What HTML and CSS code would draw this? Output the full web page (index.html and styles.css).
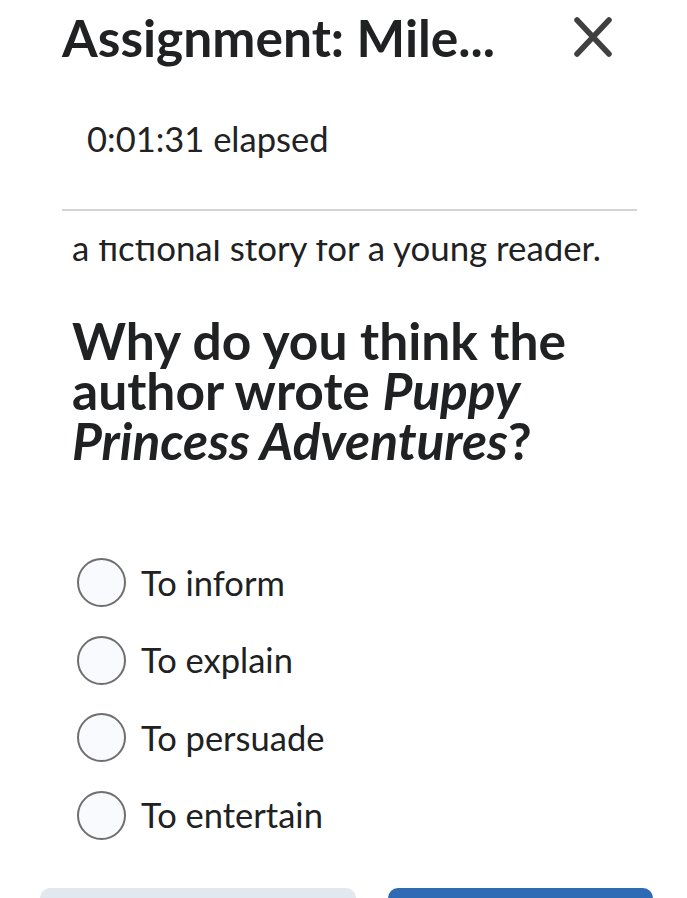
FILE: index.html
```html
<!DOCTYPE html>
<html lang="en">
<head>
<meta charset="utf-8">
<title>Assignment</title>
<link rel="stylesheet" href="styles.css">
</head>
<body>
<div class="app">
  <header class="header">
    <div class="title-row">
      <h1 class="title">Assignment: Mile...</h1>
      <button class="close" aria-label="Close">
        <svg width="40" height="40" viewBox="0 0 40 40" aria-hidden="true">
          <path d="M4 3 L36 37 M36 3 L4 37" stroke="#404040" stroke-width="5.5" stroke-linecap="round" fill="none"/>
        </svg>
      </button>
    </div>
    <div class="timer">0:01:31 elapsed</div>
    <hr class="divider">
  </header>
  <main class="scroll">
    <p class="passage">a fictional story for a young reader.</p>
    <h2 class="question">Why do you think the author wrote <em>Puppy Princess Adventures</em>?</h2>
    <ul class="options">
      <li class="option"><span class="radio"></span><span class="label">To inform</span></li>
      <li class="option"><span class="radio"></span><span class="label">To explain</span></li>
      <li class="option"><span class="radio"></span><span class="label">To persuade</span></li>
      <li class="option"><span class="radio"></span><span class="label">To entertain</span></li>
    </ul>
    <div class="actions">
      <button class="btn btn-secondary"></button>
      <button class="btn btn-primary"></button>
    </div>
  </main>
</div>
</body>
</html>
```

FILE: styles.css
```css
html, body {
  margin: 0;
  padding: 0;
  height: 100%;
  overflow: hidden;
  background: #ffffff;
}

body {
  font-family: Lato, "Noto Sans", sans-serif;
  color: #202122;
}

.app {
  display: flex;
  flex-direction: column;
  height: 100%;
}

.header {
  padding: 7px 74px 0 62px;
}

.title-row {
  display: flex;
  align-items: center;
  justify-content: space-between;
}

.title {
  margin: 0;
  font-size: 51.5px;
  line-height: 60px;
  font-weight: 700;
  color: #202122;
  white-space: nowrap;
}

.close {
  border: 0;
  background: none;
  padding: 0;
  width: 40px;
  height: 40px;
  display: flex;
}

.timer {
  margin-top: 52px;
  padding-left: 25px;
  font-size: 34.5px;
  line-height: 40px;
  color: #222222;
}

.divider {
  margin: 50px -24px 0 0;
  border: 0;
  height: 2px;
  background: #d4d4d4;
}

.scroll {
  flex: 1;
  overflow: hidden;
  margin-top: 29px;
  padding: 0 50px 0 72px;
}

.passage {
  margin: -12px 0 0 0;
  font-size: 34.8px;
  line-height: 40px;
  color: #202122;
}

.question {
  margin: 47px 0 0 0;
  font-size: 51.5px;
  line-height: 50px;
  font-weight: 700;
  color: #202122;
}

.question em {
  font-style: italic;
}

.options {
  list-style: none;
  margin: 93px 0 0 0;
  padding: 0;
  display: flex;
  flex-direction: column;
  gap: 28.5px;
}

.option {
  display: flex;
  align-items: center;
  height: 49px;
  gap: 15px;
}

.radio {
  box-sizing: border-box;
  width: 49px;
  height: 49px;
  margin-left: 5px;
  border: 2px solid #6f6f6f;
  border-radius: 50%;
  background: #f9fafe;
  flex: none;
}

.label {
  font-size: 34.5px;
  line-height: 40px;
  color: #202122;
}

.actions {
  display: flex;
  gap: 32px;
  margin: 48px -34px 0 -32px;
}

.btn {
  height: 60px;
  border: 0;
  border-radius: 10px;
  padding: 0;
}

.btn-secondary {
  width: 316px;
  background: #e2e8f0;
}

.btn-primary {
  width: 265px;
  background: #2e6bb4;
}
```
